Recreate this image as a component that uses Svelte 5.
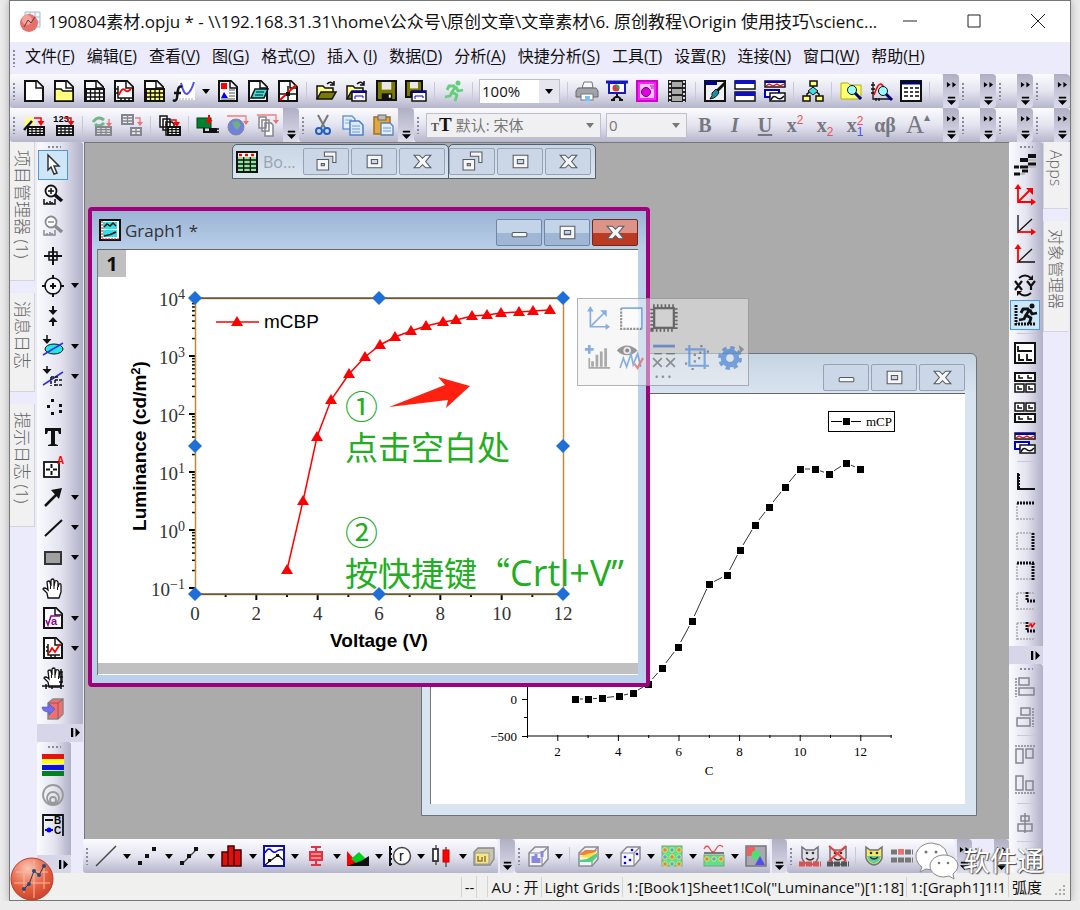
<script>
    const K = '#111';
    const G = '#858590';

    // shared pieces of the 22x22 toolbar glyphs
    const doc = `<path d="M2 1h12l6 6v14H2z" fill="#fff" stroke="${K}" stroke-width="2"/><path d="M13 1v7h7" fill="#fff" stroke="${K}" stroke-width="1.5"/>`;
    const line = (d, c = K, w = 1.5, extra = '') => `<path d="${d}" fill="none" stroke="${c}" stroke-width="${w}" ${extra}/>`;
    const fill = (d, c, s = 'none', w = 1) => `<path d="${d}" fill="${c}" stroke="${s}" stroke-width="${w}"/>`;
    const box = (x, y, w, h, f = 'none', s = 'none', sw = 1.5) =>
        `<rect x="${x}" y="${y}" width="${w}" height="${h}" fill="${f}" stroke="${s}" stroke-width="${sw}"/>`;
    const dot = (x, y, r, f, s = 'none') => `<circle cx="${x}" cy="${y}" r="${r}" fill="${f}" stroke="${s}"/>`;

    function grid(x, y, w, h, cols, rows, bg, s = K) {
        let d = '';
        for (let i = 1; i < cols; i++) d += `M${x + (w * i) / cols} ${y}v${h}`;
        for (let i = 1; i < rows; i++) d += `M${x} ${y + (h * i) / rows}h${w}`;
        return box(x, y, w, h, bg, s, 2) + line(d, s, 1.3);
    }

    const redArrow = line('M11 4h7v5', 'red', 1.5) + fill('M14.500 7h7l-3.500 5z', 'red');
    const docs = (s) => fill('M1 2h7v11h-7zM4 5h7v11h-7zM7 8h6l2 2v11h-8z', '#fff', s, 1.5);
    const runner = (c) =>
        dot(15, 3, 2.500, c) +
        line('M13 6L9 12l5 3-2 6M13 7l2 4 5-1M12 6L6 6 4 10M9 12l-2 4-5 1', c, 2.800, 'stroke-linejoin="round"');
    const folder = fill('M2 19V6h6l2 2h8v4', '#ffff90', K, 1.5) + fill('M2 19l4-7h15l-4 7z', '#7a7a00', K, 1.5) + line('M12 4q4-4 7 1M19 1v4h-4', K, 1.5);
    const floppy = (x, y, n) =>
        box(x, y, n, n, '#7a7a00', K, 2) + box(x + n * 0.25, y + 1, n * 0.5, n * 0.4, '#e8e8e8') + box(x + n * 0.25, y + n * 0.65, n * 0.55, n * 0.35, K) + box(x + n * 0.62, y + n * 0.72, 2, 3, '#fff');
    const stack =
        box(1, 1, 20, 6, '#fff', K) + line('M1 2h20', '#0000c0', 2) + line('M2 6l3-2 4 2 4-2 3 2 4-2', 'red', 1.3) +
        box(1, 10, 14, 7, '#fff', '#0000c0', 2) + box(6, 13, 15, 8, '#fff', K) + line('M7 20q2-5 5-3 4 4 8-1');
    const magnify = (x, y) => line(`M${x + 3} ${y + 3}l6 6`, '#000080', 3) + dot(x, y, 4.500, '#9ff', K);
    const zoomGlass = (c, sign) =>
        `<circle cx="9" cy="7" r="5.500" fill="#fff" stroke="${c}" stroke-width="1.800"/>` + line('M13 11l7 6', c, 3.500) + line(sign, c, 1.5) + line('M2 15v5h11v-5M5 18v2M8 17v3M10 18v2', c, 1.5);
    const hand = fill('M6 21l-1-5-4-4q1-2 4 0l1 1-1-8q2-2 3 0l1 4V3q2-2 3 0v6l1-5q2-1 3 1v5l1-3q2-1 2 1v7l-2 6z', '#fff', K, 1.300) + line('M8.500 9v3M12 9v3M15.500 10v3', K, 1);
    const cube = (inner) => fill('M2 8l6-6h13v12l-6 7H2z', '#f4f4fa', '#8a8a94', 1.5) + line('M2 8h13v13M15 8l6-6', '#8a8a94', 1.2) + inner;
    const contour = (y, h) => {
        let s = box(1, y, 20, h, '#5fe08a', '#7fa07f', 1);
        for (let i = 0; i < 3; i++) for (let j = 0; j * 7 + 5 < h + 1; j++) s += dot(4 + i * 7, y + 4 + j * 7, 2.300, (i + j) % 2 ? '#5f9ff0' : '#f07a50', '#d8f060');
        return s;
    };
    const mask = (f) => fill('M3 2l4 3h8l4-3v11q-2 6-8 7-6-1-8-7z', f, '#707078', 1.5) + dot(8, 8, 1.300, '#333') + dot(14, 8, 1.300, '#333') + line('M7 13q4 4 8 0', '#333', 1.5);
    const page4 = (y) => box(1, y, 9, 8, '#fff', K) + box(12, y, 9, 8, '#fff', K) + line(`M4 ${y + 2}v3h4M15 ${y + 2}v3h4`, K, 1.5);
    const page2 = (y) => box(1, y, 20, 8, '#fff', K, 2) + line(`M5 ${y + 2}v3h4M14 ${y + 2}v3h4`, K, 1.5);
    const dash = 'stroke-dasharray="2 1"';
    const edge = (d, on) => line(d, on ? K : '#aaa', on ? 3 : 1.5, dash);
    const frame = (t, r) => edge('M3 3v17', false) + edge('M3 19h17', false) + edge('M3 3h17', t) + (r ? edge('M19 3v17', true) : '');

    const icons = {
        newProject: doc,
        newFolder: doc + fill('M2 9h6l2 2h10v10H2z', '#ffff80', K, 1.5),
        newBook: doc + grid(3, 9, 18, 12, 4, 3, '#fff'),
        newGraph: doc + line('M5 6v12h14M3 9h2M3 13h2M8 18v2M12 18v2M16 18v2') + line('M6 15q3-8 6-5 2 3 6-1', 'red', 1.8),
        newExcel: doc + grid(3, 9, 18, 12, 4, 3, '#ffff70'),
        newFunc: box(5, 0, 17, 20, '#fff') + line('M8 3q3 12 6 11 4-2 7-12', '#5050ff', 2) + line('M6 19h15', '#aaa', 1, dash) + line('M9 7q-3-2-4 3l-1 8q-1 4-4 2M1 13h7', K, 2.500),
        newLayout: doc + box(4, 3, 6, 6, 'red') + fill('M4 18l3-6 4 6z', 'blue') + line('M12 10h6M12 13h6M4 19h14M12 16h6', '#555', 1.2),
        newNotes: doc + fill('M8 9h13l-4 9H4z', '#40e0e0', K, 1.5) + line('M9 12h8M8 15h8', K, 1),
        digitizer: doc + line('M3 14h17M11 6v14', K, 1.5) + line('M3 20L19 5', 'red', 2) + box(9, 12, 4, 4, K),
        open: folder,
        openTemplate: folder + box(7, 11, 14, 10, '#fff', K) + line('M7 12h14', '#0000c0', 2) + line('M10 19v-3h8v2', 'blue', 1),
        save: floppy(2, 1, 19),
        saveTemplate: floppy(1, 1, 16) + box(7, 11, 14, 10, '#fff', K) + line('M7 12h14', '#0000c0', 2) + line('M10 19v-3h8v2', 'blue', 1),
        run: runner('#62d07a'),
        print: fill('M6 8l2-6h8l1 6z', '#f4f8ff', '#777') + fill('M2 8h18l2 3v6H0v-6z', '#a0a4ac', '#666') + box(5, 14, 12, 6, '#fff', '#777', 1) + box(9, 16, 5, 5, '#7ac0f0'),
        slides: line('M0 2h22', '#1818c0', 3) + box(3, 3, 16, 10, '#fff', '#1818c0', 2) + dot(10, 8, 3.500, '#f03030') + fill('M10 8v-3.500a3.500 3.500 0 0 1 3 5z', '#10b060') + line('M11 14v4M5 20h4M13 20h4M7 19l4-3 4 3', K, 2),
        movie: box(1, 1, 20, 20, '#ff20ff', '#d000d0', 2) + box(4, 4, 14, 14, '#ffc0ff') + dot(10, 12, 4.500, '#e000e0', '#600060') + line('M14 6h4M15 8h3', '#c000c0', 1),
        film: box(2, 0, 18, 22, '#222') + box(6, 2, 10, 5, '#aaa') + box(6, 9, 10, 5, '#aaa') + box(6, 16, 10, 5, '#aaa') + line('M4 1v21M18 1v21', '#ddd', 2, 'stroke-dasharray="2 2"'),
        brush: box(1, 1, 20, 20, '#f0f0f0', K, 2) + line('M1 3h12', '#000090', 4) + line('M21 3l-9 9', K, 3) + fill('M12 9l3 3q-2 6-9 7 3-4 2-6z', '#1090a0', K),
        split: box(1, 1, 20, 8, '#fff', K) + line('M1 2h20', '#1010c0', 4) + box(1, 12, 20, 9, '#fff', K) + line('M1 14h20', '#1010c0', 4),
        stack,
        tree: line('M11 5v6M5 17v-3l6-4 6 4v3') + box(8, 1, 7, 5, '#ffff70', K) + fill('M11 7l5 4-5 4-5-4z', '#40e0e0', K) + box(1, 16, 7, 5, '#ffff70', K) + box(14, 16, 7, 5, '#ffff70', K),
        folderFind: fill('M1 3h7l2 2h11v14H1z', '#ffff70', '#b0b000') + magnify(12, 10),
        graphFind: line('M3 2v17h17M1 5h4M1 9h4M1 13h4M6 18v3M9 18v3', K, 1.3) + line('M4 15q4-12 7-11 4 2 3 9', 'red', 1.5) + magnify(13, 11),
        sheet: box(1, 1, 20, 20, '#fff', K, 2) + line('M1 3h20', '#000060', 3) + line('M4 8h4M10 8h3M15 8h4M4 12h4M10 12h3M15 12h4M4 16h4M10 16h3M15 16h4', '#444', 2),

        wizard: fill('M1 3l5 2 3-4 1 6 3 4-7-1-5 2 2-5z', '#ffff70') + line('M1 16L9 7', K, 2.500) + redArrow + grid(5, 13, 16, 8, 4, 3, '#fff'),
        ascii: `<text x="0" y="8" font-size="9" font-weight="700" font-family="Liberation Mono">123</text>` + redArrow + grid(4, 12, 16, 9, 4, 3, '#fff'),
        reimport: line('M2 8q5-7 11-2M13 9q-5 5-9 1', '#74b48c', 3) + line('M18 5v6', '#f08080') + fill('M15 9h6l-3 4z', '#f07070') + grid(5, 13, 15, 8, 3, 3, '#ddd', G),
        transpose: grid(1, 1, 11, 9, 2, 3, '#eee', G) + line('M14 4h5v5', '#f08080') + fill('M16 8h6l-3 4z', '#f07070') + grid(10, 14, 10, 7, 2, 2, '#eee', G),
        batch: docs(K) + line('M12 6h5v4', 'red') + fill('M14 8h7l-3 5z', 'red') + grid(9, 13, 12, 8, 3, 3, '#fff'),
        database: box(0, 4, 14, 10, '#008030', '#004010', 1) + line('M12 1v6', 'red', 2) + fill('M8.500 6h7l-3.500 4z', 'red') + line('M7 14v4h6', K, 2) + box(12, 14, 8, 5, K) + line('M20 15h2M20 18h2', K),
        web: dot(9, 13, 8, '#7080e0', '#888') + fill('M5 8l6-1 3 4-4 5-3-3z', '#70b080') + line('M0 2h19v6', '#f08080', 1.3) + fill('M16 7h6l-3 4z', '#f07070'),
        clone: `<g transform="translate(1 1)">${docs(G)}</g>` + line('M0 1h19v6', '#f08080', 1.3) + fill('M16 6h6l-3 4z', '#f07070'),
        cut: line('M6 1l7 13M16 1L9 14', '#777', 2) + `<circle cx="7" cy="17" r="3" fill="none" stroke="#2060c0" stroke-width="2"/><circle cx="15" cy="17" r="3" fill="none" stroke="#2060c0" stroke-width="2"/>`,
        copy: fill('M1 2h9l3 3v10H1z', '#e4eefc', '#6a9ad0', 1.5) + line('M3 6h7M3 9h7', '#7aa8e0', 1) + fill('M8 7h9l4 4v10H8z', '#dceafc', '#4a80c8', 1.5) + line('M10 12h8M10 15h8M10 18h8', '#6a9ad8', 1),
        paste: fill('M2 3h16v17H2z', '#e0a840', '#a07020', 1.5) + box(6, 1, 8, 5, '#bbb', '#666', 1) + fill('M9 9h9l3 3v9H9z', '#e4eefc', '#5a80b0', 1.3) + line('M11 14h8M11 17h8', '#6a9ad8', 1),

        pointer: fill('M6 1l11 11h-5l3 7-3 1-3-7-3 3z', '#fff', '#333', 1.5),
        zoomIn: zoomGlass(K, 'M6 7h6M9 4v6'),
        zoomOut: zoomGlass('#8a8a90', 'M6 7h6'),
        reader: line('M11 2v18M2 11h18', K, 2) + box(7, 7, 8, 8, 'none', K, 1.5),
        target: `<circle cx="11" cy="11" r="8" fill="#f6f6ff" stroke="${K}" stroke-width="1.500"/>` + line('M11 0v4M11 18v4M0 11h4M18 11h4M11 8v6M8 11h6', K, 2),
        selector: line('M11 1v6M11 15v6', K, 2) + fill('M6.500 5h9L11 10z', K) + fill('M6.500 17h9L11 12z', K),
        maskPoints: `<ellipse cx="12" cy="14" rx="9" ry="5" fill="#20e8e8" stroke="${K}"/>` + line('M1 20L21 8', '#3030e0', 1.5) + line('M5 0v5') + fill('M0.500 4h9l-4.500 5z', K),
        drawData: line('M1 19L21 6', '#3030e0', 1.5) + line('M9 11v9M9 11h8M13 14h8M13 19h8M13 14v6', K, 1.5, 'stroke-dasharray="3 1"') + line('M5 0v5') + fill('M0.500 3h9l-4.500 5z', K),
        dots: box(9, 3, 3, 3, K) + box(5, 9, 3, 3, K) + box(9, 16, 3, 3, K) + box(17, 8, 3, 3, K) + box(17, 14, 3, 3, K),
        text: fill('M3 2h16v6h-2l-1-3h-3v13l3 1v1H6v-1l3-1V5H6L5 8H3z', K),
        annotate: box(2, 6, 15, 15, '#fff', K, 1.8) + line('M9.500 8v4M9.500 15v4M4 13.500h4M11 13.500h4', K, 2) + `<text x="15" y="8" font-size="10" font-weight="700" fill="red" font-family="Liberation Sans">A</text>`,
        arrow: line('M3 20L15 8', K, 2.500) + fill('M9 4l11-2-3 11z', K),
        line: line('M3 19L20 3', K, 2),
        rect: box(3, 5, 16, 12, '#a0a0a0', '#333', 2),
        hand,
        formula: doc + line('M4 13l2 5 3-9h9', '#900090', 1.5) + `<text x="9" y="18" font-size="11" font-weight="700" fill="#900090" font-family="Liberation Sans">a</text>`,
        insertGraph: doc + line('M6 7v11h12M4 10h2M4 14h2M9 18v2M13 18v2') + line('M7 16l3-5 3 4 5-8', 'red', 1.8),
        handAxes: `<g transform="translate(1 -2)">${hand}</g>` + line('M0 18h22M19 1v20M17 4h4M17 9h4M17 14h4M4 16v5M10 18v3', K, 1.5),
        cube: fill('M6 5l5-4h10v15l-5 5H6z', '#ee7070', '#888', 1.5) + line('M16 5v16M6 5h10l5-4', '#a05050', 1) + fill('M0 9q0 5 7 5v3l6-6-6-5v3q-4 0-7 0z', '#7070f0', '#4040c0', 0.5),
        colors: box(0, 0, 22, 5, '#e81010') + box(0, 5, 22, 5, '#ffff20') + box(0, 11, 22, 5, '#1010e0') + box(0, 17, 22, 5, '#008020'),
        rings: `<g fill="none" stroke="#999" stroke-width="1.800"><circle cx="11" cy="11" r="10"/><circle cx="11" cy="14" r="6"/><circle cx="11" cy="16" r="3"/></g>`,
        legend: line('M1 22V1h20v21M3 6h8', K, 1.8) + line('M3 16h8', 'blue', 2) + dot(7, 16, 2.500, 'blue') + `<text x="12" y="10" font-size="10" font-weight="700" font-family="Liberation Sans">B</text><text x="12" y="20" font-size="10" font-weight="700" font-family="Liberation Sans">C</text>`,

        steps: line('M14 2h8M6 6h8', K, 4) + line('M14 10h8M6 13h8M0 13h5', K, 3) + line('M8 17h6M0 20h6', K, 3) + line('M14 6h8M14 13h8M6 20h5', '#bbb', 2),
        axesAll: line('M4 3v15h15M4 18L16 6', 'red', 1.8) + fill('M0.500 5L4 0l3.500 5zM17 14.500l5 3.500-5 3.500zM12 4h7v7z', 'red'),
        axesX: line('M4 1v17L18 5', K, 1.3) + line('M4 18h15', 'red', 1.8) + fill('M17 14.500l5 3.500-5 3.500z', 'red'),
        axesY: line('M21 18H4L18 5', K, 1.3) + line('M4 18V3', 'red', 1.8) + fill('M0.500 5L4 0l3.500 5z', 'red'),
        swap: line('M1 7l7 9M8 7l-7 9M13 7l4 5 4-5M17 12v4', K, 2.200) + line('M5 4q6-5 12 0M5 19q6 5 12 0', K, 2) + fill('M19 1v5h-5zM3 22v-5h5z', K),
        rescale: line('M2 1v19h20', K, 3, dash) + `<g transform="translate(3 -1)">${runner('#111')}</g>`,
        page1: box(1, 1, 20, 20, '#fff', K, 2) + line('M4 4v5h14M5 12v6h5M13 12v6h5', K, 1.8),
        pageA: page2(1) + page4(12),
        pageB: page4(1) + page2(12),
        frameLB: line('M4 3v16h17', K, 2) + line('M5 4v15h16', K, 2, dash),
        frameT: frame(true, false),
        frameR: frame(false, true),
        frameAll: frame(true, true),
        frameIn: frame(false, false) + line('M13 2v9h8', K, 3, dash),
        frameInRed: frame(false, false) + line('M13 2v9h8', K, 3, dash) + line('M14 7l3-3 1 3 3-4', 'red', 1.5),
        alignL: line('M2 2v19', G, 1.5, dash) + box(5, 2, 10, 7, 'none', G) + box(5, 12, 15, 7, 'none', G),
        alignR: line('M19 2v19', G, 1.5, dash) + box(7, 2, 9, 7, 'none', G) + box(3, 12, 13, 8, 'none', G),
        alignT: line('M1 2h20', G, 1.5, dash) + box(2, 5, 7, 14, 'none', G) + box(12, 5, 7, 9, 'none', G),
        alignB: line('M1 19h20', G, 1.5, dash) + box(2, 2, 7, 14, 'none', G) + box(12, 7, 7, 9, 'none', G),
        alignC: line('M11 1v20', G) + box(7, 4, 8, 5, 'none', G) + box(4, 12, 14, 7, 'none', G),

        plotLine: line('M1 21L21 1', '#444', 1.5),
        scatter: box(1, 16, 4, 4, K) + box(8, 9, 4, 4, K) + box(15, 2, 4, 4, K),
        lineSymbol: line('M3 19L19 3', '#444', 1.2) + box(1, 16, 4, 4, K) + box(8, 9, 4, 4, K) + box(15, 2, 4, 4, K),
        column: fill('M1 7h6V1h6v4h7v16H1z', '#e01010', '#400', 1.5) + line('M7 7v14M13 5v16', '#400', 1.5),
        multi: box(1, 1, 20, 20, '#fff', '#1010a0', 2) + line('M2 8q3-6 6-3 3 4 6 1 3-2 6-1', 'blue', 1.500) + line('M2 20l5-4 8-6 5 5', K, 1.2) + box(5, 14, 3, 3, K) + box(13, 9, 3, 3, K),
        boxPlot: line('M11 1v20M6 2h10M6 20h10', '#e83040', 2) + box(5, 7, 12, 8, '#ff8a8a', '#e83040', 2) + line('M5 11h12', '#e83040', 2),
        area: fill('M0 21V6l6 7 5 8z', 'red') + fill('M4 14l8-7 6 6-4 5-6-1z', '#00d020') + fill('M0 21l8-3 6-2 8-5v10z', K),
        polar: line('M1 1v20M0 4h3M0 9h3M0 14h3M0 19h3', K, 2) + `<circle cx="13" cy="11" r="8.500" fill="#fff" stroke="#444" stroke-width="1.500"/><text x="10" y="16" font-size="14" font-family="Liberation Sans">r</text>`,
        candle: line('M5 0v20M15 2v20', '#555', 1.5) + box(2, 4, 5, 12, '#fff', '#333', 1.8) + box(12, 5, 6, 12, 'red', '#c00', 1),
        templates: fill('M5 3h16v11l-4 6H1V7z', '#c8c4b0', '#888', 1.3) + box(2, 8, 14, 11, '#f0e880', '#999', 1) + line('M5 11v5h4v-4M12 11v6', '#a07040', 1.5),
        bars3d: cube(line('M6 18v-7M9 18V9M12 18v-5M15 12V6', '#8888e0', 3)),
        surface: cube(fill('M2 10l6-5h12l-5 6z', '#f08040') + fill('M2 12l8-3 9-2-4 6z', '#ffe040') + fill('M2 15l8-1 10-6v4l-5 5H2z', '#50d080')),
        scatter3d: cube(dot(6, 12, 1.300, 'blue') + dot(11, 15, 1.300, 'blue') + dot(6, 18, 1.300, 'blue') + dot(13, 5, 1.300, 'blue') + dot(18, 9, 1.300, 'blue')),
        contour: contour(1, 20),
        contourLine: line('M1 4q3-6 6 0t6 0 7-2', '#f05050', 1.3) + line('M1 8h20', '#555') + contour(10, 11),
        ternary: box(1, 1, 20, 20, '#a8a8b4', '#777', 1.5) + box(2, 2, 8, 9, '#f06060') + dot(11, 10, 4.500, '#50e070') + fill('M10 20l5-9 5 9z', '#5050f0'),
        maskOn: mask('#e0e0e4') + line('M0 19h22', '#e05050', 5, 'stroke-dasharray="6 1"'),
        maskOff: mask('#e0e0e4') + line('M0 19h22', '#555', 5, 'stroke-dasharray="6 1"') + line('M2 1l17 15M19 1L2 16', '#f04040', 2),
        maskColor: mask('#f8e860') + fill('M4 11h14l-2 5-5 3-5-3z', '#60d0a0') + line('M7 12q4 4 8 0', '#333', 1.5),
        maskCells: line('M0 7h22M0 15h22', '#777', 5, 'stroke-dasharray="6 1"') + box(7, 4, 6, 5, '#f07070'),

        axisTool: line('M4 4v15h16M5 18L17 6', '#3b7fd8', 1.5) + fill('M1 5l3-5 3 5zM18 16l4 3-4 3zM13 4h6v6z', '#3b7fd8'),
        frameTool: box(2, 2, 19, 19, '#fff') + line('M2 2v19h19', '#555', 2, dash) + line('M2 2h19v19', '#3b7fd8', 1.5),
        tickTool: line('M1 1h20v20H1z', '#222', 5, 'stroke-dasharray="1.500 2"') + box(2, 2, 18, 18, '#d4d4d4', '#222', 2),
        addPlot: line('M3 0v8M-1 4h8', '#3b7fd8', 2.500) + line('M3 12v9h19', '#777', 1.5) + line('M6 20v-5M10 20V9M14 20V6M18 20V3', '#777', 2.500),
        viewPlot: fill('M-2 5q9-9 19 0-10 9-19 0z', '#555') + dot(7.500, 5, 3.500, '#ddd') + dot(7.500, 5, 1.800, '#444') + line('M1 21l3-9 3 8 4-12 2 10 4-10 3 12', '#3b7fd8', 1.5) + line('M14 17l3 4 5-9', '#f04040', 2),
        lineTool: line('M1 1h20', '#2a62c0', 2.500) + line('M2 8h7M13 8h8', '#555', 1.5) + line('M1 12l8 8M9 12l-8 8M13 12l8 8M21 12l-8 8', '#555', 1.500),
        cropTool: line('M4 0v19h18M0 4h18v18', '#3b7fd8', 2) + line('M8 9h2M13 7h2M12 12h2M8 15h2M14 1h2M20 6h2M0 17h2M6 22h2', '#555', 2),
        gear: `<circle cx="11" cy="12" r="9.500" fill="none" stroke="#2f74d0" stroke-width="3" stroke-dasharray="4 3.460"/><circle cx="11" cy="12" r="6" fill="none" stroke="#2f74d0" stroke-width="5"/>` + fill('M19 0l5 4-5 5 1-4z', '#666'),
    };

    const standardBar = [
        ['newProject', '新建项目'], ['newFolder', '新建文件夹'], ['newBook', '新建工作簿'], ['newGraph', '新建图'],
        ['newExcel', '新建 Excel'], ['newFunc', '新建函数图', true], ['newLayout', '新建布局'], ['newNotes', '新建备注'], ['digitizer', '数字化'], '-',
        ['open', '打开'], ['openTemplate', '打开模板'], ['save', '保存'], ['saveTemplate', '保存模板'], '-', ['run', '重新计算'], '-',
    ];
    const viewBar = [
        ['print', '打印'], ['slides', '放映'], ['movie', '视频'], ['film', '影片'], '-',
        ['brush', '代码编辑'], ['split', '拆分窗口'], ['stack', '层叠窗口'], '-', ['tree', '项目管理器'], '-',
        ['folderFind', '查找文件'], ['graphFind', '查找图'], ['sheet', '结果表'], '-',
    ];
    const importBar = [
        ['wizard', '导入向导'], ['ascii', '导入 ASCII'], '-', ['reimport', '重新导入'], ['transpose', '转置'], '-',
        ['batch', '批处理'], '-', ['database', '数据库'], ['web', '网页'], ['clone', '克隆导入'],
    ];
    const editBar = [['cut', '剪切'], ['copy', '复制'], ['paste', '粘贴']];
    const toolsBar = [
        ['pointer', '指针'], ['zoomIn', '放大'], ['zoomOut', '缩小'], ['reader', '屏幕读数'], ['target', '数据读数', true],
        ['selector', '数据选择'], ['maskPoints', '屏蔽数据', true], ['drawData', '绘制数据', true], ['dots', '簇'], ['text', '文本'],
        ['annotate', '注释'], ['arrow', '箭头', true], ['line', '直线', true], ['rect', '矩形', true], ['hand', '平移'],
        ['formula', '公式', true], ['insertGraph', '插入图', true], ['handAxes', '缩放平移'], ['cube', '旋转'],
    ];
    const styleBar = [['colors', '颜色'], ['rings', '气泡'], ['legend', '图例']];
    const layerBar = [
        ['steps', '图案'], ['axesAll', '重设坐标轴'], ['axesX', 'X 轴'], ['axesY', 'Y 轴'], ['swap', '交换 XY'], ['rescale', '自动缩放'], '-',
        ['page1', '单层'], ['pageA', '合并'], ['pageB', '提取'], ['stack', '堆叠'], '-',
        ['frameLB', '左下'], ['frameT', '上'], ['frameR', '右'], ['frameAll', '右上'], ['frameIn', '插图'], ['frameInRed', '插图数据'],
    ];
    const alignBar = [['alignL', '左对齐'], ['alignR', '右对齐'], '-', ['alignT', '上对齐'], ['alignB', '下对齐'], '-', ['alignC', '居中'], '-'];
    const graphBar = [
        ['plotLine', '折线图', true], ['scatter', '散点图', true], ['lineSymbol', '点线图', true], ['column', '柱状图', true], ['multi', '多图层', true],
        ['boxPlot', '箱线图', true], ['area', '面积图', true], ['polar', '极坐标', true], ['candle', 'K 线图', true], ['templates', '模板库'],
    ];
    const graph3dBar = [
        ['bars3d', '三维柱状', true], '-', ['surface', '曲面', true], ['scatter3d', '三维散点', true], ['contour', '等高线', true],
        ['contourLine', '轮廓', true], ['ternary', '三元图'],
    ];
    const maskBar = [['maskOn', '屏蔽'], ['maskOff', '取消屏蔽'], '-', ['maskColor', '屏蔽颜色'], ['maskCells', '屏蔽区域']];
    const floatRows = [
        [['axisTool', '坐标轴'], ['frameTool', '边框'], ['tickTool', '刻度']],
        [['addPlot', '添加图'], ['viewPlot', '显示'], ['lineTool', '线条'], ['cropTool', '裁剪'], ['gear', '设置']],
    ];

    const menus = [
        ['文件(', 'F'], ['编辑(', 'E'], ['查看(', 'V'], ['图(', 'G'], ['格式(', 'O'], ['插入 (', 'I'], ['数据(', 'D'],
        ['分析(', 'A'], ['快捷分析(', 'S'], ['工具(', 'T'], ['设置(', 'R'], ['连接(', 'N'], ['窗口(', 'W'], ['帮助(', 'H'],
    ];

    let active = $state('pointer');

    const luminance = [
        [189, 320], [205, 251], [219, 187], [233, 150], [251, 124], [267, 107], [282, 95], [297, 87], [313, 81],
        [328, 76], [345, 72], [358, 70], [374, 66], [389, 65], [403, 63], [421, 62], [435, 61], [452, 60],
    ];
    const current = [
        [144, 305], [157, 305], [171, 304], [188, 302], [202, 299], [217, 290], [231, 274], [247, 253], [261, 227], [278, 190],
        [296, 181], [309, 156], [324, 131], [338, 113], [354, 93], [369, 75], [384, 75], [398, 80], [415, 69], [429, 75],
    ];
    const points = (list) => list.map((p) => p.join(',')).join(' ');
    const powers = ['4', '3', '2', '1', '0', '−1'];
    const logTicks = powers.slice(1).flatMap((_, i) => [2, 3, 4, 5, 6, 7, 8, 9].map((n) => 48 + 58 * (i + 1) - 58 * Math.log10(n)));
    const handles = [97, 281, 465].flatMap((x) => [48, 196, 344].map((y) => [x, y])).filter(([x, y]) => !(x === 281 && y === 196));
</script>

{#snippet icon(name)}
    <svg class="icon" viewBox="0 0 22 22" aria-hidden="true">{@html icons[name]}</svg>
{/snippet}

{#snippet caret()}
    <svg class="caret" viewBox="0 0 8 5" aria-hidden="true"><path d="M0 0h8L4 5z" /></svg>
{/snippet}

{#snippet tools(list)}
    {#each list as t}
        {#if t === '-'}
            <span class="sep"></span>
        {:else}
            <div class="slot">
                <button class="tool" class:active={t[0] === active || t[0] === 'rescale'} aria-label={t[1]} onclick={() => (active = t[0])}>{@render icon(t[0])}</button>
                {#if t[2]}<button class="drop" aria-label="{t[1]}选项">{@render caret()}</button>{/if}
            </div>
        {/if}
    {/each}
{/snippet}

{#snippet more(full)}
    <button class="more" aria-label="更多按钮">
        <svg viewBox="0 0 12 26" aria-hidden="true">
            {#if full}<path d="M1 1l4 3-4 3zM7 1l4 3-4 3z" />{/if}
            <path d="M2 17h8v2H2zM1 21h10l-5 5z" />
        </svg>
    </button>
{/snippet}

{#snippet overflow()}
    <div class="overflow">
        {@render more(true)}<span class="grip"></span>
        {@render more(true)}<span class="grip"></span>
        {@render more(true)}<span class="grip"></span>
        {@render more(true)}
    </div>
{/snippet}

{#snippet winButtons(kinds)}
    <div class="win-buttons">
        {#each kinds as kind}
            <button class="win-btn {kind}" aria-label={kind}>
                <svg viewBox="0 0 20 20" aria-hidden="true">
                    {#if kind === 'min'}
                        <rect x="3" y="10" width="14" height="4" rx="1" />
                    {:else if kind === 'max'}
                        <path d="M3 4h14v12H3zM7 8v4h6V8z" fill-rule="evenodd" />
                    {:else if kind === 'restore'}
                        <path d="M8 1h11v10h-3V5H8z" /><path d="M1 8h11v10H1zM5 12v2h3v-2z" fill-rule="evenodd" />
                    {:else}
                        <path d="M2 4h5l3 3 3-3h5l-5 6 5 6h-5l-3-3-3 3H2l5-6z" />
                    {/if}
                </svg>
            </button>
        {/each}
    </div>
{/snippet}

<div class="app">
    <header class="titlebar">
        <svg class="app-icon" viewBox="0 0 22 22" aria-hidden="true">
            <path d="M6 1h15v15H6zM11 1v15M16 1v15M6 6h15M6 11h15" fill="#eef4fa" stroke="#a8bccc" />
            <circle cx="10" cy="12" r="9" fill="#e8706a" /><circle cx="8" cy="9" r="5" fill="#f8b8b0" opacity=".7" />
            <path d="M5 16l4-7 3 3 4-6" fill="none" stroke="#60404a" />
        </svg>
        <h1>190804素材.opju * - \\192.168.31.31\home\公众号\原创文章\文章素材\6. 原创教程\Origin 使用技巧\scienc...</h1>
        <button class="caption" aria-label="最小化"><svg viewBox="0 0 14 14"><path d="M0 7h14" /></svg></button>
        <button class="caption" aria-label="最大化"><svg viewBox="0 0 14 14"><path d="M1 1h12v12H1z" /></svg></button>
        <button class="caption" aria-label="关闭"><svg viewBox="0 0 14 14"><path d="M0 0l14 14M14 0L0 14" /></svg></button>
    </header>

    <nav class="menubar">
        <span class="grip"></span>
        {#each menus as [label, key]}
            <button>{label}<u>{key}</u>)</button>
        {/each}
    </nav>

    <div class="bar">
        <div class="strip grow">
            <span class="grip"></span>
            {@render tools(standardBar)}
            <div class="combo zoom">
                <select aria-label="缩放"><option>100%</option></select>
                <span class="combo-arrow">{@render caret()}</span>
            </div>
            <span class="sep"></span>
            {@render tools(viewBar)}
        </div>
        {@render overflow()}
    </div>

    <div class="bar">
        <div class="strip"><span class="grip"></span>{@render tools(importBar)}</div>
        {@render more(false)}
        <div class="strip"><span class="grip"></span>{@render tools(editBar)}</div>
        {@render more(false)}
        <div class="strip grow">
            <span class="grip"></span>
            <div class="combo font">
                <b class="tt">T<b>T</b></b>
                <select aria-label="字体" disabled><option>默认: 宋体</option></select>
                <span class="combo-arrow">{@render caret()}</span>
            </div>
            <div class="combo size">
                <select aria-label="字号" disabled><option>0</option></select>
                <span class="combo-arrow">{@render caret()}</span>
            </div>
            <button class="fmt"><b>B</b></button>
            <button class="fmt"><b><i>I</i></b></button>
            <button class="fmt"><b><u>U</u></b></button>
            <button class="fmt">x<span class="sup">2</span></button>
            <button class="fmt">x<span class="sub">2</span></button>
            <button class="fmt">x<span class="both"><span>2</span><span>1</span></span></button>
            <button class="fmt greek">αβ</button>
            <button class="fmt big">A<span class="up">▴</span></button>
        </div>
        {@render overflow()}
    </div>

    <main>
        <aside class="tabs left">
            <button>项目管理器 (1)</button>
            <button>消息日志</button>
            <button>提示日志 (1)</button>
        </aside>

        <aside class="side">
            <div class="vbar wide">
                <span class="vgrip"></span>
                {@render tools(toolsBar)}
                <button class="vmore" aria-label="更多工具"><svg viewBox="0 0 8 8"><path d="M0 0h2v8H0zM4 0l4 4-4 4z" /></svg></button>
            </div>
            <div class="vbar styles">
                <span class="vgrip"></span>
                {@render tools(styleBar)}
                <button class="vmore end" aria-label="更多样式"><svg viewBox="0 0 8 8"><path d="M0 0h2v8H0zM4 0l4 4-4 4z" /></svg></button>
            </div>
        </aside>

        <section class="center">
            <div class="desktop">
                <div class="mini book">
                    <svg class="icon" viewBox="0 0 22 22">{@html grid(1, 1, 20, 20, 3, 5, '#8ce89c') + box(2, 2, 18, 4, '#fff') + line('M3 4h3M9 4h3M15 4h3', 'red', 2.5)}</svg>
                    <span>Bo...</span>
                    {@render winButtons(['restore', 'max', 'close'])}
                </div>
                <div class="mini second">
                    {@render winButtons(['restore', 'max', 'close'])}
                </div>

                <article class="win graph2">
                    <div class="win-title">{@render winButtons(['min', 'max', 'close'])}</div>
                    <div class="sheet">
                        <svg class="chart" viewBox="0 0 534 410">
                            <g stroke="#000" fill="none">
                                <path d="M96.500 30v312h364" />
                                {#each Array(13) as _, i}
                                    <path d="M{96.5 + i * 30.3} 341v{i % 2 ? 6 : 3}" />
                                {/each}
                                <path d="M91 305.500h5M93 323.500h3M91 342.500h5" />
                                <polyline points={points(current)} stroke="#333" />
                            </g>
                            {#each current as [x, y]}
                                <rect x={x - 5} y={y - 5} width="10" height="10" fill="#fff" />
                                <rect x={x - 3} y={y - 3} width="7" height="7" />
                            {/each}
                            <g class="serif small">
                                <text x="86" y="310" text-anchor="end">0</text>
                                <text x="86" y="347" text-anchor="end">−500</text>
                                {#each [2, 4, 6, 8, 10, 12] as v}
                                    <text x={66 + v * 30.3} y="362" text-anchor="middle">{v}</text>
                                {/each}
                                <text x="278" y="381" text-anchor="middle">C</text>
                                <rect x="397.500" y="17.500" width="66" height="20" fill="#fff" stroke="#000" />
                                <path d="M400 27.500h11M420 27.500h10" stroke="#000" />
                                <rect x="412" y="24" width="7" height="7" />
                                <text x="435" y="32">mCP</text>
                            </g>
                        </svg>
                    </div>
                </article>

                <article class="win graph1">
                    <div class="win-title">
                        <svg class="icon" viewBox="0 0 22 22">{@html box(1, 1, 20, 20, '#fff', K, 2) + box(4, 3, 14, 7, '#30e0e8') + box(4, 11, 14, 7, '#30e0e8') + line('M5 8l3-3 3 2 3-3 3 3M5 17q7-1 12-4') + line('M3 2v18h17', 'red', 1, dash)}</svg>
                        <h2>Graph1 *</h2>
                        {@render winButtons(['min', 'max', 'close'])}
                    </div>
                    <div class="sheet">
                        <span class="layer">1</span>
                        <svg class="chart" viewBox="0 0 540 413">
                            <g stroke="#000" stroke-width="2">
                                {#each powers as _, i}<path d="M91 {48 + i * 58}h6" />{/each}
                                {#each logTicks as y}<path d="M94 {y}h3" stroke-width="1.5" />{/each}
                                {#each Array(13) as _, i}<path d="M{97 + (i * 368) / 12} 344v{i % 2 ? 3 : 6}" />{/each}
                            </g>
                            <rect x="97.500" y="48.500" width="368" height="296" fill="none" stroke="#c08a30" stroke-width="1.500" />
                            <path d="M97 48h368M97 344h368" stroke="#222" />
                            <g class="serif" fill="#333">
                                {#each powers as p, i}
                                    <text x="87" y={56 + i * 58} text-anchor="end">10<tspan dy="-7" font-size="14">{p}</tspan></text>
                                {/each}
                                {#each [0, 2, 4, 6, 8, 10, 12] as v}
                                    <text x={97 + (v * 368) / 12} y="370" text-anchor="middle">{v}</text>
                                {/each}
                            </g>
                            <g class="axis-title">
                                <text x="281" y="397" text-anchor="middle">Voltage (V)</text>
                                <text transform="translate(48 196) rotate(-90)" text-anchor="middle">Luminance (cd/m<tspan dy="-6" font-size="13">2</tspan><tspan dy="6">)</tspan></text>
                            </g>
                            <polyline points={points(luminance)} fill="none" stroke="red" stroke-width="1.500" />
                            <path d="M118 72h43" stroke="red" stroke-width="1.500" />
                            {#each [...luminance, [139, 72]] as [x, y]}
                                <path d="M{x} {y - 6}l6 10h-12z" fill="red" />
                            {/each}
                            <text x="166" y="78" class="key">mCBP</text>
                            {#each handles as [x, y]}
                                <path d="M{x} {y - 7}l7 7-7 7-7-7z" fill="#1f6fd8" />
                            {/each}
                            <g class="notes">
                                <text x="247" y="169">①</text>
                                <text x="247" y="210">点击空白处</text>
                                <text x="247" y="295">②</text>
                                <text x="247" y="336">按快捷键“<tspan class="latin">Crtl+V”</tspan></text>
                            </g>
                            <path d="M372 136l-32-9 7 8-56 22 59-7-2 8z" fill="#ff2010" />
                        </svg>
                        <div class="gutter"></div>
                    </div>
                </article>

                <div class="float">
                    {#each floatRows as row}
                        <div class="float-row">
                            {#each row as [name, label]}
                                <button aria-label={label}>{@render icon(name)}</button>
                            {/each}
                        </div>
                    {/each}
                    <div class="float-more">•&nbsp;•&nbsp;•</div>
                </div>
            </div>

            <div class="bar bottom">
                <div class="strip"><span class="grip"></span>{@render tools(graphBar)}</div>
                {@render more(false)}
                <div class="strip"><span class="grip"></span>{@render tools(graph3dBar)}</div>
                {@render more(false)}
                <div class="strip grow"><span class="grip"></span>{@render tools(maskBar)}</div>
                {@render more(true)}<span class="grip wide-grip"></span>{@render more(true)}
            </div>
        </section>

        <aside class="side right">
            <div class="vbar">
                <span class="vgrip"></span>
                {@render tools(layerBar)}
                <button class="vmore" aria-label="更多图层"><svg viewBox="0 0 8 8"><path d="M0 0h2v8H0zM4 0l4 4-4 4z" /></svg></button>
            </div>
            <div class="vbar grow">
                <span class="vgrip"></span>
                {@render tools(alignBar)}
            </div>
        </aside>

        <aside class="tabs right-tabs">
            <button>Apps</button>
            <button>对象管理器</button>
        </aside>
    </main>

    <footer class="status">
        <span>--</span>
        <span class="blank"></span>
        <span>AU : 开</span>
        <span>Light Grids</span>
        <span>1:[Book1]Sheet1!Col("Luminance")[1:18]</span>
        <span>1:[Graph1]1!1</span>
        <span>弧度</span>
        <svg class="resize" viewBox="0 0 12 12" aria-hidden="true"><path d="M9 0h2v2H9zM5 4h2v2H5zM9 4h2v2H9zM1 8h2v2H1zM5 8h2v2H5zM9 8h2v2H9z" fill="#aaa" /></svg>
    </footer>

    <svg class="orb" viewBox="0 0 44 44" aria-hidden="true">
        <defs>
            <radialGradient id="orb" cx=".4" cy=".25" r=".8">
                <stop offset="0" stop-color="#fbc4b4" /><stop offset=".6" stop-color="#e4603f" /><stop offset="1" stop-color="#c8402a" />
            </radialGradient>
        </defs>
        <circle cx="22" cy="22" r="21" fill="url(#orb)" stroke="#b84030" />
        <path d="M14 8v28M24 3v38M34 8v24M6 15h32M4 26h36" stroke="#f8b8a0" fill="none" />
        <path d="M14 32l5-5 5-13 5 4 5-9" stroke="#334" fill="none" />
        <g fill="#2a4a78"><circle cx="14" cy="32" r="2" /><circle cx="19" cy="27" r="2" /><circle cx="24" cy="14" r="2" /><circle cx="29" cy="18" r="2" /><circle cx="34" cy="9" r="2" /></g>
    </svg>

    <div class="brand">
        <svg viewBox="0 0 44 38" aria-hidden="true">
            <path d="M17 1C8 1 1 7 1 14q0 7 6 11l-2 5 6-3q14 4 21-7Q35 3 17 1z" fill="#fff" stroke="#888" />
            <path d="M29 13c-8 0-14 5-14 11s6 11 14 11l5-1 5 3-1-5q5-4 5-8c0-6-6-11-14-11z" fill="#fff" stroke="#888" />
            <g fill="#777"><circle cx="11" cy="10" r="1.500" /><circle cx="21" cy="10" r="1.500" /><circle cx="24" cy="21" r="1.300" /><circle cx="33" cy="21" r="1.300" /></g>
        </svg>
        <span>软件通</span>
    </div>
</div>

<style>
    :global(body) {
        background: #ececec;
    }
    .app {
        --rebar: #ebebfb;
        --sheen: linear-gradient(#fbfbff 0, #e4e4f0 50%, #b6b6cc 100%);
        --sheen-side: linear-gradient(90deg, #fafaff 0, #e4e4f0 50%, #b0b0c8 100%);
        position: relative;
        display: flex;
        flex-direction: column;
        box-sizing: border-box;
        height: calc(100vh - 9px);
        margin: 0 9px;
        border: 1px solid #777;
        background: var(--rebar);
        box-shadow: 0 0 8px #aaa;
        font-family: "Open Sans", "Noto Sans CJK SC", sans-serif;
        font-size: 15px;
        color: #111;
    }
    button {
        padding: 0;
        border: 0;
        background: none;
        font: inherit;
        color: inherit;
    }
    .icon {
        display: block;
        width: 22px;
        height: 22px;
        overflow: visible;
    }
    .caret {
        display: block;
        width: 8px;
        height: 5px;
    }

    .titlebar {
        display: flex;
        align-items: center;
        height: 41px;
        padding-left: 9px;
        background: #fff;
    }
    .app-icon {
        width: 22px;
        height: 22px;
        margin-right: 7px;
    }
    h1 {
        flex: 1;
        min-width: 0;
        margin: 0;
        overflow: hidden;
        font-size: 17px;
        font-weight: 400;
        line-height: 24px;
        white-space: nowrap;
    }
    .caption {
        flex: none;
        width: 64px;
        height: 100%;
    }
    .caption svg {
        width: 14px;
        height: 14px;
        fill: none;
        stroke: #222;
    }

    .menubar {
        display: flex;
        align-items: center;
        gap: 12px;
        height: 32px;
        font-size: 16px;
        line-height: 22px;
    }
    .menubar .grip {
        margin-right: -6px;
    }
    .menubar button {
        padding-bottom: 4px;
        white-space: nowrap;
    }
    u {
        text-underline-offset: 2px;
    }

    .grip {
        flex: none;
        align-self: center;
        width: 9px;
        height: 18px;
        background: radial-gradient(circle at 4px 2px, #8a8a9c 1px, transparent 1px) 0 0 / 9px 4px repeat-y;
    }
    .bar {
        display: flex;
        height: 34px;
    }
    .strip {
        display: flex;
        align-items: center;
        flex: none;
        background: var(--sheen);
        border-radius: 3px 4px 0 3px;
    }
    .strip.grow {
        flex: 1;
        min-width: 0;
    }
    .slot {
        display: flex;
        flex: none;
        align-items: center;
    }
    .tool {
        display: grid;
        place-items: center;
        box-sizing: border-box;
        width: 30px;
        height: 30px;
    }
    .tool.active {
        border: 1px solid #4a98dc;
        background: #cfe6f8;
    }
    .drop {
        display: grid;
        place-items: center;
        width: 14px;
        height: 30px;
    }
    .sep {
        flex: none;
        width: 1px;
        height: 18px;
        margin: 0 4px 0 3px;
        background: #c8c8d8;
    }
    .more {
        flex: none;
        width: 16px;
        background: linear-gradient(#b0b0c4, #dcdcec);
        border-radius: 0 4px 4px 0;
    }
    .more svg {
        display: block;
        width: 11px;
        height: 24px;
        margin: 4px auto 0;
    }
    .overflow {
        display: flex;
        background: var(--sheen);
    }
    .overflow .grip {
        width: 21px;
    }

    .combo {
        position: relative;
        display: flex;
        align-items: center;
        flex: none;
        box-sizing: border-box;
        height: 25px;
        border: 1px solid #c0c0c8;
        background: #fff;
    }
    .combo select {
        flex: 1;
        min-width: 0;
        height: 100%;
        padding: 0 2px;
        border: 0;
        background: none;
        appearance: none;
        font: inherit;
        color: #111;
        opacity: 1;
    }
    .combo-arrow {
        position: absolute;
        top: 0;
        right: 0;
        bottom: 0;
        display: grid;
        place-items: center;
        width: 20px;
        background: #e6e6ee;
        pointer-events: none;
    }
    .zoom {
        width: 81px;
        margin: 0 4px 0 2px;
    }
    .font {
        width: 175px;
        margin: 0 5px 0 3px;
    }
    .size {
        width: 81px;
        margin-right: 3px;
    }
    .font, .size {
        background: #f0f0f2;
    }
    .font select, .size select {
        color: #777;
    }
    .font .combo-arrow, .size .combo-arrow {
        background: none;
        fill: #777;
    }
    .tt {
        padding: 0 2px 0 4px;
        font: 700 12px "Liberation Serif", serif;
        color: #555;
    }
    .tt b {
        font-size: 19px;
        color: #111;
    }
    .fmt {
        position: relative;
        width: 30px;
        height: 30px;
        font: 700 20px/30px "Liberation Serif", serif;
        color: #77777f;
    }
    .sup, .sub, .both {
        font: 12px/11px "Liberation Sans", sans-serif;
        color: #f05050;
    }
    .sup {
        vertical-align: 8px;
    }
    .sub {
        vertical-align: -4px;
    }
    .both {
        display: inline-grid;
        vertical-align: middle;
    }
    .both span + span {
        color: #5050f0;
    }
    .big {
        font-size: 25px;
        font-weight: 400;
    }
    .up {
        position: absolute;
        top: -8px;
        right: 0;
        font-size: 12px;
    }

    main {
        display: flex;
        flex: 1;
        min-height: 0;
    }
    .tabs {
        display: flex;
        flex-direction: column;
        gap: 12px;
        width: 27px;
    }
    .tabs button {
        box-sizing: border-box;
        width: 25px;
        padding: 8px 0 22px;
        border: solid #d4d4dc;
        border-width: 0 1px 1px 0;
        background: #f1f1f1;
        writing-mode: vertical-rl;
        text-orientation: sideways;
        text-align: left;
        font-size: 17px;
        font-weight: 300;
        line-height: 24px;
        color: #666;
    }
    .right-tabs button {
        border-width: 0 0 1px 1px;
        font-size: 16px;
    }
    .side {
        display: flex;
        flex-direction: column;
    }
    .vbar {
        display: flex;
        flex-direction: column;
        box-sizing: border-box;
        width: 34px;
        background: var(--sheen-side);
        border-radius: 3px;
    }
    .vbar.wide {
        flex: 1;
        width: 46px;
    }
    .vbar.wide .slot {
        flex: 1;
    }
    .vbar.grow {
        flex: 1;
    }
    .styles {
        height: 131px;
    }
    .vbar .slot {
        padding-left: 1px;
    }
    .vbar .sep {
        width: 18px;
        height: 1px;
        margin: 3px auto 4px;
    }
    .vgrip {
        flex: none;
        width: 14px;
        height: 8px;
        margin-left: 10px;
        background: radial-gradient(circle at 2px 5px, #8a8a9c 1px, transparent 1px) 0 0 / 4px 8px;
    }
    .vmore {
        flex: none;
        display: flex;
        align-items: center;
        justify-content: flex-end;
        height: 18px;
        padding-right: 3px;
        background: #d6d6e8;
    }
    .vmore svg {
        width: 9px;
        height: 9px;
    }
    .vmore.end {
        margin-top: auto;
    }

    .center {
        display: flex;
        flex: 1;
        flex-direction: column;
        min-width: 0;
    }
    .desktop {
        position: relative;
        flex: 1;
        margin-left: 1px;
        overflow: hidden;
        background: #ababab;
        box-shadow: inset 1px 1px #777;
    }
    .bottom .tool {
        width: 28px;
    }
    .bottom .more {
        width: 15px;
        margin-left: 2px;
    }
    .wide-grip {
        width: 20px;
    }

    .mini {
        position: absolute;
        top: 2px;
        display: flex;
        align-items: center;
        box-sizing: border-box;
        height: 35px;
        padding: 0 3px;
        border: 1px solid #555f6c;
        border-radius: 5px 5px 0 0;
        background: linear-gradient(#c8d6e4, #dbe5f0);
        font-size: 16px;
        line-height: 22px;
        color: #9aa3b0;
    }
    .book {
        left: 148px;
        width: 217px;
    }
    .second {
        left: 364px;
        width: 148px;
        padding: 0;
    }
    .mini span {
        margin-left: 5px;
    }
    .win-buttons {
        display: flex;
        gap: 2px;
        margin-left: auto;
    }
    .mini .win-buttons {
        align-self: flex-start;
        margin-top: 3px;
    }
    .second .win-buttons {
        margin-left: 0;
    }
    .win-btn {
        display: grid;
        place-items: center;
        box-sizing: border-box;
        width: 46px;
        height: 27px;
        border: 1px solid #95a3b8;
        border-radius: 2px;
        background: #cbd7e6;
    }
    .win-btn svg {
        width: 21px;
        height: 21px;
        fill: #f6f6f6;
        stroke: #555b66;
    }

    .win {
        position: absolute;
        display: flex;
        flex-direction: column;
        box-sizing: border-box;
    }
    .win-title {
        display: flex;
        align-items: center;
        flex: none;
        height: 39px;
    }
    .win-title .win-buttons {
        margin-top: 4px;
    }
    .sheet {
        position: relative;
        flex: 1;
        background: #fff;
        border-top: 1px solid #666;
        border-left: 1px solid #777;
    }
    .chart {
        display: block;
    }
    .graph1 {
        left: 4px;
        top: 65px;
        width: 562px;
        height: 480px;
        padding: 0 8px 8px 5px;
        border: 4px solid #a0007c;
        border-radius: 4px;
        background: linear-gradient(#9cb4d4 0, #bad0ea 40px);
    }
    .graph1 .chart {
        width: 540px;
        height: 413px;
    }
    .graph1 .win-title {
        height: 38px;
    }
    .graph1 .win-btn {
        border-color: #6f86a8;
        background: linear-gradient(#c4d4e8 50%, #9fb7d4 50%);
    }
    .graph1 .close {
        border-color: #6a2a20;
        background: linear-gradient(#dc9488 50%, #bc3a22 50%);
    }
    h2 {
        margin: 0 0 0 4px;
        font-size: 17px;
        font-weight: 400;
        color: #333;
    }
    .graph1 .icon {
        margin-left: 2px;
    }
    .layer {
        position: absolute;
        top: 0;
        left: 0;
        width: 28px;
        background: #c0c0c0;
        font: 700 20px/27px "Noto Sans", sans-serif;
        text-align: center;
    }
    .gutter {
        height: 11px;
        background: #c0c0c0;
    }
    .graph2 {
        left: 337px;
        top: 211px;
        width: 556px;
        height: 463px;
        padding: 0 11px 11px 8px;
        border: 1px solid #6a737e;
        border-radius: 6px 6px 0 0;
        background: linear-gradient(#c6d4e2 0, #d8e4f0 40px);
    }
    .graph2 .win-title .win-buttons {
        margin-top: 7px;
    }
    .graph2 .chart {
        width: 534px;
        height: 410px;
    }
    .serif {
        font: 19px "Liberation Serif", serif;
    }
    .small {
        font-size: 13px;
    }
    .axis-title {
        font: 700 19px "Liberation Sans", sans-serif;
    }
    .key {
        font: 19px "Liberation Sans", sans-serif;
    }
    .notes {
        font: 33px "Noto Sans CJK SC", sans-serif;
        fill: #22ad22;
    }
    .latin {
        font-family: "Open Sans", sans-serif;
        font-size: 36px;
    }

    .float {
        position: absolute;
        left: 493px;
        top: 156px;
        display: flex;
        flex-direction: column;
        box-sizing: border-box;
        width: 172px;
        height: 88px;
        border: 1px solid rgba(110, 110, 120, .5);
        background: rgba(240, 240, 242, .5);
    }
    .float-row {
        display: flex;
        gap: 7px;
        padding: 7px 7px 8px;
        opacity: .6;
    }
    .float .icon {
        width: 26px;
        height: 24px;
    }
    .float-more {
        margin-top: -6px;
        font-size: 10px;
        line-height: 12px;
        text-align: center;
        color: #888;
    }

    .status {
        display: flex;
        align-items: center;
        justify-content: flex-end;
        height: 27px;
        background: #f0f0ef;
        white-space: nowrap;
    }
    .status span {
        padding: 0 2px 0 3px;
        border-left: 1px solid #d4d4d4;
    }
    .status .blank {
        width: 5px;
        height: 22px;
    }
    .resize {
        width: 12px;
        height: 12px;
        margin: 8px 4px 0 10px;
    }
    .orb {
        position: absolute;
        left: 0;
        bottom: -1px;
        width: 44px;
        height: 44px;
    }
    .brand {
        position: absolute;
        right: 26px;
        bottom: 20px;
        display: flex;
        align-items: center;
        gap: 4px;
        font-size: 27px;
        line-height: 38px;
        color: #fff;
        text-shadow: 1px 1px 1px #444, -1px 0 1px #888;
    }
    .brand svg {
        width: 44px;
        height: 38px;
    }
</style>
